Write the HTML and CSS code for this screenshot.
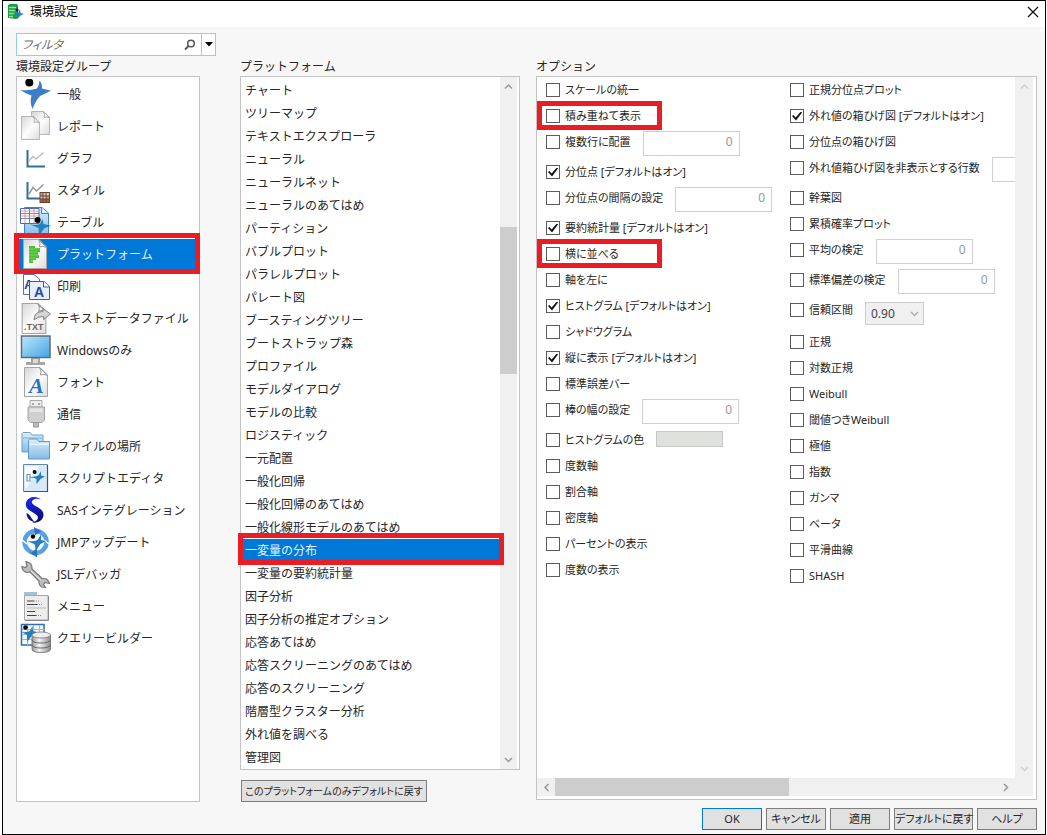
FILE: index.html
```html
<!DOCTYPE html>
<html lang="ja">
<head>
<meta charset="utf-8">
<meta name="viewport" content="width=device-width, initial-scale=1">
<title>環境設定</title>
<link rel="stylesheet" href="styles.css">
</head>
<body>
<svg class="defs" aria-hidden="true">
  <defs>
    <linearGradient id="page" x1="0" y1="0" x2="1" y2="1"><stop offset="0" stop-color="#d4d4d4"/><stop offset=".5" stop-color="#fdfdfd"/><stop offset="1" stop-color="#dcdcdc"/></linearGradient>
    <linearGradient id="sky" x1="0" y1="0" x2="1" y2="1"><stop offset="0" stop-color="#bfe6fa"/><stop offset="1" stop-color="#3fa6e6"/></linearGradient>
    <linearGradient id="folder" x1="0" y1="0" x2="0" y2="1"><stop offset="0" stop-color="#d9eefb"/><stop offset="1" stop-color="#84bbe6"/></linearGradient>
    <linearGradient id="metal" x1="0" y1="0" x2="1" y2="0"><stop offset="0" stop-color="#999"/><stop offset=".4" stop-color="#f4f4f4"/><stop offset="1" stop-color="#8c8c8c"/></linearGradient>
    <linearGradient id="sas" x1="0" y1="0" x2="0" y2="1"><stop offset="0" stop-color="#1a2cff"/><stop offset="1" stop-color="#06085e"/></linearGradient>
    <symbol id="figure" viewBox="0 0 32 32">
      <path fill="#3b7ec6" d="M1.500 11Q11 12 18 9.500Q20.500 6 20.500 1.500Q23.500 5 23 9.500Q28 11 32 11.500Q27 14.500 21 17Q16.500 22 13.500 30Q10.500 23 12.500 16.500Q6 14.500 1.500 11Z"/>
      <circle cx="10.300" cy="3.500" r="4"/>
    </symbol>
    <symbol id="axes" viewBox="0 0 32 32">
      <path fill="none" stroke="#2f6f94" stroke-width="2" d="M8.500 7V23.500H26"/>
    </symbol>
    <symbol id="sheet" viewBox="0 0 24 30">
      <path fill="url(#page)" stroke="#a5a5a5" d="M.5.5H16L23.500 8V29.500H.5Z"/>
      <path fill="#f8f8f8" stroke="#999" d="M15.500.5Q18 4 16.500 8Q20 6.500 23.500 8.500Z"/>
    </symbol>
  </defs>
</svg>

<main class="dialog">
  <header class="titlebar">
    <svg class="app-icon" viewBox="0 0 16 16" aria-hidden="true"><path fill="#1d9a45" d="M0 1L2 0H9L10 2V14L8 15L0 14Z"/><path stroke="#8be89a" stroke-width="1.500" d="M1 3.500H8M1 6.500H8M1 9.500H7M1 12.500H5"/><path fill="#2b7fc0" d="M5 9L10 9L12 5L12.500 9L16 10L12.500 11.500L9 15.500L9.500 11.500Z"/><circle cx="9" cy="6" r="1.600" fill="#123"/></svg>
    <h1 class="title">環境設定</h1>
    <button class="close" type="button" aria-label="閉じる"><svg viewBox="0 0 12 12"><path stroke="#111" stroke-width="1.200" d="M1 1L11 11M11 1L1 11"/></svg></button>
  </header>

  <div class="content">
    <div class="filter">
      <input class="filter-input" type="search" placeholder="フィルタ" aria-label="フィルタ">
      <svg class="magnifier" viewBox="0 0 12 12" aria-hidden="true"><circle cx="7" cy="4.500" r="3.300" fill="none" stroke="#555" stroke-width="1.500"/><path stroke="#555" stroke-width="1.800" d="M4.500 7L1 10.500"/></svg>
      <button class="filter-menu" type="button" aria-label="フィルタのオプション"><svg viewBox="0 0 8 5"><path d="M0 0H8L4 4.500Z"/></svg></button>
    </div>

    <div class="columns">
      <section class="column">
        <h2 class="heading">環境設定グループ</h2>
        <ul class="panel groups">
          <li><button class="group" type="button"><svg viewBox="0 0 32 32"><use href="#figure"/></svg>一般</button></li>
          <li><button class="group" type="button"><svg viewBox="0 0 32 32"><use href="#sheet" x="12" y="0" width="19" height="24"/><use href="#sheet" x="2" y="5" width="19" height="24"/></svg>レポート</button></li>
          <li><button class="group" type="button"><svg viewBox="0 0 32 32"><use href="#axes"/><path fill="none" stroke="#b9bfc4" stroke-width="1.500" d="M10 18L14 13.500L17 16L24.500 9.500"/></svg>グラフ</button></li>
          <li><button class="group" type="button"><svg viewBox="0 0 32 32"><use href="#axes"/><path fill="none" stroke="#93999e" stroke-width="1.500" d="M10 19L14 12.500L17.500 16L24.500 9.500"/><path fill="#684338" d="M20.500 17H31V28H20.500Z"/><path fill="#d9a44a" d="M21.500 18h2v2.500h-2zM27.500 21.500h2.500v2h-2.500z"/><path fill="#d8c9c2" d="M24.500 18h2v2.500h-2zM27.500 18h2.500v2.500h-2.500zM21.500 21.500h2v2h-2zM24.500 21.500h2v2h-2z"/><path fill="#b55a48" d="M21.500 24.500h2v2.500h-2zM24.500 24.500h2v2.500h-2zM27.500 24.500h2.500v2.500h-2.500z"/></svg>スタイル</button></li>
          <li><button class="group" type="button"><svg viewBox="0 0 32 32"><path fill="url(#folder)" stroke="#3a84c4" d="M5.500.5H23L29.500 6V29.500H5.500Z"/><path fill="#e4f2fc" stroke="#3a84c4" d="M22.500.5V6.500H29.500"/><path fill="#fff" stroke="#3b6ec0" d="M1.500 1.500H20V16.500H1.500Z"/><path stroke="#3b6ec0" stroke-width=".8" d="M1.500 6.500H20M1.500 11.500H20M10.500 1.500V16.500"/><path stroke="#e58282" stroke-width=".8" d="M6 1.500V16.500M15 1.500V16.500M1.500 4H20M1.500 9H20"/><path fill="#2382bd" d="M11 17.500Q17 18.500 21 17L23.500 12L24.500 17L32 18.500L25 21.500L20 29L19.500 21Z"/><circle cx="18.600" cy="13" r="3"/></svg>テーブル</button></li>
          <li><button class="group is-selected is-marked" type="button" aria-current="true"><svg viewBox="0 0 32 32"><use href="#sheet" x="4" y="0" width="24" height="30"/><path fill="#4dbd35" d="M10 7H16V9H21V13H19V16H20V19H17V21H14V24H10Z"/><path stroke="#8edb75" stroke-width=".7" d="M10 10H20M10 13H19M10 16H19M10 19H17M10 22H14"/></svg>プラットフォーム</button></li>
          <li><button class="group" type="button"><svg viewBox="0 0 32 32"><path fill="#fff" stroke="#5b6fb8" d="M4.500 3.500H15L20.500 8V23.500H4.500Z"/><text class="glyph glyph-print" x="5" y="18" font-size="13">A</text><path fill="#e6effb" stroke="#3f57ae" d="M10.500 10.500H25L30.500 15.500V28.500H10.500Z"/><path fill="#fff" stroke="#3f57ae" d="M24.500 10.500V16H30.500"/><text class="glyph glyph-print" x="15" y="26" font-size="14">A</text></svg>印刷</button></li>
          <li><button class="group" type="button"><svg viewBox="0 0 32 32"><use href="#sheet" x="2" y="0" width="26" height="31"/><path fill="#d5d5d5" stroke="#777" stroke-width=".9" d="M15 17Q15 8.500 24 8.500V5.500L31.500 11L24.500 16.500V13.500Q19 13 15 17Z"/><text class="glyph glyph-txt" x="5" y="27" font-size="9">.TXT</text></svg>テキストデータファイル</button></li>
          <li><button class="group" type="button"><svg viewBox="0 0 32 32"><path fill="#a5a5a5" d="M12 22H21V27H26V30H7V27H12Z"/><path fill="#d9d9d9" d="M14 24H19V28H14Z"/><path fill="url(#sky)" stroke="#606d74" stroke-width="1.500" d="M2.500 1H31V22.500H2.500Z"/></svg>Windowsのみ</button></li>
          <li><button class="group" type="button"><svg viewBox="0 0 32 32"><use href="#sheet" x="5" y="0" width="24" height="30"/><text class="glyph glyph-font" x="10" y="26" font-size="22">A</text></svg>フォント</button></li>
          <li><button class="group" type="button"><svg viewBox="0 0 32 32"><path fill="#eee" stroke="#aaa" d="M11 1.500H23V8H11Z"/><path fill="#aaa" d="M13 4H15V6H13ZM19 4H21V6H19Z"/><path fill="#d0d0d0" stroke="#a6a6a6" d="M9 8H25.500V21L23 23.500H11.500L9 21Z"/><path fill="#e6e6e6" d="M11 9.500H23.500V13H11Z"/><path fill="#bbb" stroke="#999" d="M14.500 23.500H19.500V28H14.500Z"/></svg>通信</button></li>
          <li><button class="group" type="button"><svg viewBox="0 0 32 32"><path fill="url(#folder)" stroke="#6f9fc4" d="M3 21V2.500L4 1.500H11L13 4H24V21Z"/><path fill="#9fc9ea" d="M3.500 6H23.500V8H3.500Z"/><path fill="url(#folder)" stroke="#6798c0" d="M9.500 28V9.500L10.500 8H18L20 10.500H30.500V28Z"/><path fill="#e8f6ff" d="M10 12.500H30V14H10Z"/></svg>ファイルの場所</button></li>
          <li><button class="group" type="button"><svg viewBox="0 0 32 32"><path fill="#d8e9f8" stroke="#6a87a8" d="M4.500 1.500H28.500V28.500H4.500Z"/><path fill="none" stroke="#34587e" stroke-width="1.200" d="M28.500 2V28.500H5"/><path fill="#f7fbff" d="M6 3H20L8 25H6Z"/><path fill="none" stroke="#8494a5" stroke-width="1.200" d="M8 11.500H11V18H8ZM11 14.500H14"/><path fill="#247fc0" d="M12 13.500Q17 14 19.500 12.500L22 8L22 12.500L26 13.500L21.500 16L17.500 21L17.500 16Z"/><circle cx="15.600" cy="9" r="2"/></svg>スクリプトエディタ</button></li>
          <li><button class="group" type="button"><svg viewBox="0 0 32 32"><path fill="url(#sas)" d="M22 4.500C18 .5 8.500 1 7 8C6 13 10 15 14 17.500C19 20.500 20 22 18 25C17 26 15 27 13 27.500C20 28.500 24.500 24.500 24.500 19.500C24.500 15.500 21 13.500 17.500 11.500C12.500 8.500 12 7.500 13.500 5.500C15 3.500 19 3.500 22 4.500Z"/><path fill="#0a0f8c" d="M7.500 18C7.500 23 11 26.500 16 27C12.500 24.500 11.500 19.500 7.500 18Z"/></svg>SASインテグレーション</button></li>
          <li><button class="group" type="button"><svg viewBox="0 0 32 32"><circle cx="16.600" cy="15" r="11" fill="#f3f9ff" stroke="#5a9fe0" stroke-width="4.500"/><path fill="#2f72c4" d="M15 0L22 4L16 8.500ZM18 21.500L11.500 26L18 30.500Z"/><path stroke="#fff" stroke-width="1.500" d="M3 13L8 17M25 13L30 17"/><path fill="#247fc0" d="M8.500 14Q15 15 18.500 13L22 7.500L22 13L27 14L21.500 17L16.500 24L16 17.500Z"/><circle cx="14" cy="9.500" r="2.200"/></svg>JMPアップデート</button></li>
          <li><button class="group" type="button"><svg viewBox="0 0 32 32"><path fill="#bdbdbd" stroke="#777" stroke-width="1.200" d="M7 2.500L8 7L6.500 8.500L3 7.500Q3 12 7.500 13.500L11 13L20 22Q19.500 26 23 28L26.500 28.500L24.500 25.500L26 23.500L30.500 24.500Q29 19.500 24.500 19.500L23 19.500L13 10Q13.500 3.500 7 2.500Z"/><path stroke="#eee" d="M12 12L22 21.500"/></svg>JSLデバッガ</button></li>
          <li><button class="group" type="button"><svg viewBox="0 0 32 32"><path fill="#a3c2d2" d="M5 1H18V5H5Z"/><path fill="#ededed" stroke="#a8a8a8" d="M5.500 4.500H29V29H5.500Z"/><path fill="none" stroke="#888" d="M29.500 5V29.500H6"/><path stroke="#444" stroke-width="1.200" d="M8 10H15M8 13.500H18M8 20.500H16M8 24.500H17"/><path stroke="#888" stroke-dasharray="1 1" d="M15 10H21M18 13.500H24M17 24.500H23"/><path stroke="#bbb" d="M8 17H27"/></svg>メニュー</button></li>
          <li><button class="group" type="button"><svg viewBox="0 0 32 32"><path fill="#f5faff" stroke="#2f6fb0" stroke-width="1.500" d="M2.500 1.500H25V22H2.500Z"/><path stroke="#9dbcdc" d="M3 6.500H25M3 11.500H25M3 16.500H25M8.500 2V22M14.500 2V22M20.500 2V22"/><path fill="#247fc0" d="M2.500 9Q8 9.500 11 8L13.500 3L14 8L18 9L13.500 12L8 19L8 12Z"/><circle cx="6.500" cy="4.500" r="2.300"/><path fill="url(#metal)" stroke="#666" stroke-width=".8" d="M13 12V26Q13 29.500 22 29.500T31.500 26V12Z"/><path fill="none" stroke="#666" d="M13 17Q14 20 22 20T31.500 17M13 22Q14 25 22 25T31.500 22"/><ellipse cx="22.200" cy="12" rx="9.300" ry="3" fill="#eee" stroke="#777" stroke-width=".8"/></svg>クエリービルダー</button></li>
        </ul>
      </section>

      <section class="column platform-column">
        <h2 class="heading">プラットフォーム</h2>
        <div class="panel scroll-panel">
          <ul class="platforms">
            <li><button class="platform" type="button">チャート</button></li>
            <li><button class="platform" type="button">ツリーマップ</button></li>
            <li><button class="platform" type="button">テキストエクスプローラ</button></li>
            <li><button class="platform" type="button">ニューラル</button></li>
            <li><button class="platform" type="button">ニューラルネット</button></li>
            <li><button class="platform" type="button">ニューラルのあてはめ</button></li>
            <li><button class="platform" type="button">パーティション</button></li>
            <li><button class="platform" type="button">バブルプロット</button></li>
            <li><button class="platform" type="button">パラレルプロット</button></li>
            <li><button class="platform" type="button">パレート図</button></li>
            <li><button class="platform" type="button">ブースティングツリー</button></li>
            <li><button class="platform" type="button">ブートストラップ森</button></li>
            <li><button class="platform" type="button">プロファイル</button></li>
            <li><button class="platform" type="button">モデルダイアログ</button></li>
            <li><button class="platform" type="button">モデルの比較</button></li>
            <li><button class="platform" type="button">ロジスティック</button></li>
            <li><button class="platform" type="button">一元配置</button></li>
            <li><button class="platform" type="button">一般化回帰</button></li>
            <li><button class="platform" type="button">一般化回帰のあてはめ</button></li>
            <li><button class="platform" type="button">一般化線形モデルのあてはめ</button></li>
            <li><button class="platform is-selected is-marked" type="button" aria-current="true">一変量の分布</button></li>
            <li><button class="platform" type="button">一変量の要約統計量</button></li>
            <li><button class="platform" type="button">因子分析</button></li>
            <li><button class="platform" type="button">因子分析の推定オプション</button></li>
            <li><button class="platform" type="button">応答あてはめ</button></li>
            <li><button class="platform" type="button">応答スクリーニングのあてはめ</button></li>
            <li><button class="platform" type="button">応答のスクリーニング</button></li>
            <li><button class="platform" type="button">階層型クラスター分析</button></li>
            <li><button class="platform" type="button">外れ値を調べる</button></li>
            <li><button class="platform" type="button">管理図</button></li>
          </ul>
          <div class="scrollbar vertical">
            <svg class="arrow" viewBox="0 0 9 9"><path d="M1 6.500L4.500 3L8 6.500"/></svg>
            <div class="track"><span class="lead"></span><span class="thumb"></span><span class="rest"></span></div>
            <svg class="arrow" viewBox="0 0 9 9"><path d="M1 3L4.500 6.500L8 3"/></svg>
          </div>
        </div>
        <button class="button reset" type="button">このプラットフォームのみデフォルトに戻す</button>
      </section>

      <section class="column options-column">
        <h2 class="heading">オプション</h2>
        <div class="panel options-panel">
          <div class="options">
            <div class="option-list">
              <div class="option"><label class="check"><input type="checkbox">スケールの統一</label></div>
              <div class="option"><label class="check is-marked"><input type="checkbox">積み重ねて表示</label></div>
              <div class="option tall"><label class="check"><input type="checkbox">複数行に配置</label><input class="number" type="text" value="0" disabled aria-label="複数行に配置の値"></div>
              <div class="option"><label class="check"><input type="checkbox" checked>分位点 [デフォルトはオン]</label></div>
              <div class="option tall"><label class="check"><input type="checkbox">分位点の間隔の設定</label><input class="number" type="text" value="0" disabled aria-label="分位点の間隔の値"></div>
              <div class="option"><label class="check"><input type="checkbox" checked>要約統計量 [デフォルトはオン]</label></div>
              <div class="option"><label class="check is-marked"><input type="checkbox">横に並べる</label></div>
              <div class="option"><label class="check"><input type="checkbox">軸を左に</label></div>
              <div class="option"><label class="check"><input type="checkbox" checked>ヒストグラム [デフォルトはオン]</label></div>
              <div class="option"><label class="check"><input type="checkbox">シャドウグラム</label></div>
              <div class="option"><label class="check"><input type="checkbox" checked>縦に表示 [デフォルトはオン]</label></div>
              <div class="option"><label class="check"><input type="checkbox">標準誤差バー</label></div>
              <div class="option tall"><label class="check"><input type="checkbox">棒の幅の設定</label><input class="number" type="text" value="0" disabled aria-label="棒の幅の値"></div>
              <div class="option"><label class="check"><input type="checkbox">ヒストグラムの色</label><button class="swatch" type="button" disabled aria-label="色の選択"></button></div>
              <div class="option"><label class="check"><input type="checkbox">度数軸</label></div>
              <div class="option"><label class="check"><input type="checkbox">割合軸</label></div>
              <div class="option"><label class="check"><input type="checkbox">密度軸</label></div>
              <div class="option"><label class="check"><input type="checkbox">パーセントの表示</label></div>
              <div class="option"><label class="check"><input type="checkbox">度数の表示</label></div>
            </div>
            <div class="option-list">
              <div class="option"><label class="check"><input type="checkbox">正規分位点プロット</label></div>
              <div class="option"><label class="check"><input type="checkbox" checked>外れ値の箱ひげ図 [デフォルトはオン]</label></div>
              <div class="option"><label class="check"><input type="checkbox">分位点の箱ひげ図</label></div>
              <div class="option tall"><label class="check"><input type="checkbox">外れ値箱ひげ図を非表示とする行数</label><input class="number" type="text" value="" disabled aria-label="非表示とする行数の値"></div>
              <div class="option"><label class="check"><input type="checkbox">幹葉図</label></div>
              <div class="option"><label class="check"><input type="checkbox">累積確率プロット</label></div>
              <div class="option tall"><label class="check"><input type="checkbox">平均の検定</label><input class="number" type="text" value="0" disabled aria-label="平均の値"></div>
              <div class="option tall"><label class="check"><input type="checkbox">標準偏差の検定</label><input class="number" type="text" value="0" disabled aria-label="標準偏差の値"></div>
              <div class="option taller"><label class="check"><input type="checkbox">信頼区間</label><span class="select"><select disabled aria-label="信頼水準"><option>0.90</option></select><svg class="arrow" viewBox="0 0 9 9"><path d="M1 3L4.500 6.500L8 3"/></svg></span></div>
              <div class="option"><label class="check"><input type="checkbox">正規</label></div>
              <div class="option"><label class="check"><input type="checkbox">対数正規</label></div>
              <div class="option"><label class="check"><input type="checkbox">Weibull</label></div>
              <div class="option"><label class="check"><input type="checkbox">閾値つきWeibull</label></div>
              <div class="option"><label class="check"><input type="checkbox">極値</label></div>
              <div class="option"><label class="check"><input type="checkbox">指数</label></div>
              <div class="option"><label class="check"><input type="checkbox">ガンマ</label></div>
              <div class="option"><label class="check"><input type="checkbox">ベータ</label></div>
              <div class="option"><label class="check"><input type="checkbox">平滑曲線</label></div>
              <div class="option"><label class="check"><input type="checkbox">SHASH</label></div>
            </div>
          </div>
          <div class="scrollbar vertical is-idle">
            <svg class="arrow" viewBox="0 0 9 9"><path d="M1 6.500L4.500 3L8 6.500"/></svg>
            <svg class="arrow" viewBox="0 0 9 9"><path d="M1 3L4.500 6.500L8 3"/></svg>
          </div>
          <div class="scrollbar horizontal">
            <svg class="arrow" viewBox="0 0 9 9"><path d="M6.500 1L3 4.500L6.500 8"/></svg>
            <div class="track"><span class="thumb"></span></div>
            <svg class="arrow" viewBox="0 0 9 9"><path d="M3 1L6.500 4.500L3 8"/></svg>
          </div>
          <div class="corner"></div>
        </div>
      </section>
    </div>

    <footer class="actions">
      <button class="button is-default" type="button">OK</button>
      <button class="button" type="button">キャンセル</button>
      <button class="button" type="button">適用</button>
      <button class="button is-wide" type="button">デフォルトに戻す</button>
      <button class="button" type="button">ヘルプ</button>
    </footer>
  </div>
</main>
</body>
</html>
```

FILE: styles.css
```css
* {
  box-sizing: border-box;
}

body {
  margin: 0;
  background: #fff;
  color: #262626;
  font: 12px/20px "Noto Sans", "Noto Sans CJK JP", sans-serif;
}

button,
input,
select {
  margin: 0;
  color: inherit;
  font: inherit;
}

ul {
  margin: 0;
  padding: 0;
  list-style: none;
}

.defs {
  position: absolute;
  width: 0;
  height: 0;
}

.dialog {
  display: flex;
  flex-direction: column;
  min-height: 100vh;
  margin: 0 1px 0 2px;
  border: 1px solid #000;
  background: #f7f7f7;
}

.titlebar {
  display: flex;
  align-items: center;
  gap: 6px;
  height: 26px;
  padding: 0 6px 4px 5px;
  background: #fff;
}

.app-icon {
  width: 16px;
  height: 16px;
}

.title {
  flex: 1;
  margin: 0;
  color: #000;
  font-size: 12px;
  font-weight: 400;
}

.close {
  display: flex;
  padding: 0;
  border: 0;
  background: none;
}

.close svg {
  width: 12px;
  height: 12px;
}

.content {
  display: flex;
  flex: 1;
  flex-direction: column;
  padding: 6px 8px 4px 13px;
}

.filter {
  display: flex;
  align-items: center;
  width: 200px;
  height: 23px;
  border: 1px solid #8fcdec;
  background: #fff;
}

.filter-input {
  flex: 1;
  min-width: 0;
  padding: 0 0 0 5px;
  border: 0;
  background: none;
  font-style: italic;
  font-feature-settings: "palt";
  outline: 0;
  appearance: none;
}

.filter-input::placeholder {
  color: #707070;
}

.magnifier {
  width: 12px;
  height: 12px;
  margin-right: 5px;
}

.filter-menu {
  display: flex;
  align-items: center;
  justify-content: center;
  width: 14px;
  height: 100%;
  padding: 0;
  border: 0;
  border-left: 1px solid #8fcdec;
  background: #fff;
}

.filter-menu svg {
  width: 8px;
  height: 5px;
}

.columns {
  display: grid;
  flex: 1;
  grid-template-columns: 184fr 304fr 501fr;
  column-gap: 16px;
}

.column {
  display: flex;
  flex-direction: column;
  min-width: 0;
}

.platform-column {
  padding-left: 24px;
}

.options-column {
  padding-bottom: 2px;
}

.heading {
  height: 20px;
  margin: 0;
  font-size: 12px;
  font-weight: 400;
  line-height: 22px;
  white-space: nowrap;
}

.panel {
  flex: 1;
  border: 1px solid #c3c3c3;
  background: #fff;
}

.groups {
  padding-top: 2px;
}

.group,
.platform {
  display: flex;
  align-items: center;
  width: 100%;
  padding: 0;
  border: 0;
  background: none;
  text-align: left;
  white-space: nowrap;
}

.group {
  gap: 6px;
  height: 32px;
  padding-left: 2px;
  line-height: 22px;
}

.group svg {
  flex: none;
  width: 32px;
  height: 32px;
}

.glyph {
  font-family: "Liberation Serif", serif;
  font-weight: 700;
}

.glyph-print {
  fill: #2747a8;
  font-family: "Liberation Sans", sans-serif;
}

.glyph-txt {
  fill: #666;
  font-family: "Liberation Sans", sans-serif;
}

.glyph-font {
  fill: #2672c8;
  font-style: italic;
}

.is-selected {
  background: #0078d7;
  color: #e4f2ff;
}

/* Red call-out frame around the entries being explained */
.is-marked {
  position: relative;
}

.is-marked::after {
  position: absolute;
  z-index: 1;
  inset: -6px -4px -3px;
  border: 5px solid #eb1c24;
  content: "";
  pointer-events: none;
}

.group.is-marked::after {
  right: -1px;
  left: -3px;
}

.scroll-panel {
  display: flex;
  padding-right: 2px;
}

.platforms {
  flex: 1;
  padding-top: 2px;
}

.platform {
  height: 23px;
  padding-left: 4px;
}

.platform.is-marked::after {
  left: -3px;
}

.scrollbar {
  display: flex;
  align-items: center;
  justify-content: space-between;
  background: #f0f0f0;
}

.vertical {
  flex-direction: column;
  width: 17px;
  padding: 5px 0;
}

.horizontal {
  height: 18px;
  padding: 0 5px;
  gap: 4px;
}

.arrow {
  flex: none;
  width: 9px;
  height: 9px;
  fill: none;
  stroke: #999;
  stroke-width: 1.5;
}

.is-idle .arrow {
  stroke: #d0d0d0;
}

.track {
  display: flex;
  flex: 1;
}

.vertical .track {
  flex-direction: column;
  width: 100%;
}

.lead {
  flex: 136;
}

.rest {
  flex: 382;
}

.thumb {
  flex: 147;
  background: #cdcdcd;
}

.horizontal .track {
  height: 100%;
}

.horizontal .thumb {
  flex: 0 0 53%;
}

.options-panel {
  display: grid;
  grid-template-rows: 1fr 18px;
  grid-template-columns: minmax(0, 1fr) 18px;
  padding: 0 3px 3px 0;
}

.corner {
  background: #f0f0f0;
}

.options-panel .vertical {
  width: auto;
}

.options {
  display: grid;
  grid-template-columns: 244px 1fr;
  padding-left: 9px;
  overflow: hidden;
  font-size: 11px;
  font-feature-settings: "palt";
}

.option-list {
  min-width: 0;
}

.option {
  display: flex;
  align-items: flex-start;
  gap: 12px;
  height: 26px;
}

.option.tall {
  height: 30px;
}

.option.taller {
  height: 32px;
}

.check {
  display: flex;
  flex: none;
  align-items: center;
  gap: 5px;
  height: 26px;
  white-space: nowrap;
}

.check input {
  display: grid;
  flex: none;
  width: 14px;
  height: 14px;
  border: 1px solid #5c5c5c;
  background: #fff;
  appearance: none;
  place-items: center;
}

.check input:checked::before {
  width: 10px;
  height: 9px;
  background: #111;
  clip-path: polygon(0 50%, 14% 38%, 37% 68%, 88% 0, 100% 12%, 40% 100%);
  content: "";
}

.check.is-marked {
  min-width: 98px;
}

.check.is-marked::after {
  inset: -2px -18px -1px -9px;
}

.number {
  flex: none;
  width: 97px;
  height: 25px;
  margin-top: 2px;
  padding: 0 6px 4px;
  border: 1px solid #d0d0d0;
  background: #fff;
  color: #999;
  font-size: 12px;
  text-align: right;
}

.swatch {
  width: 67px;
  height: 16px;
  margin-top: 4px;
  border: 1px solid #c8c8c8;
  background: #dde3dc;
}

.select {
  display: flex;
  align-items: center;
  width: 59px;
  height: 23px;
  margin-top: 5px;
  padding-right: 4px;
  border: 1px solid #ccc;
  background: #f0f0f0;
  font-size: 12px;
}

.select select {
  flex: 1;
  min-width: 0;
  padding: 0 0 0 5px;
  border: 0;
  background: none;
  color: #444;
  opacity: 1;
  appearance: none;
}

.select .arrow {
  stroke: #b0b0b0;
}

.button {
  width: 60px;
  height: 22px;
  padding: 0;
  border: 1px solid #7d7d7d;
  background: #e1e1e1;
  font-size: 11px;
  font-feature-settings: "palt";
  line-height: 20px;
  white-space: nowrap;
}

.button.is-default {
  border-color: #0078d7;
}

.button.is-wide {
  width: 79px;
}

.button.reset {
  width: 186px;
  margin: 10px 0 0 1px;
  font-size: 10px;
}

.actions {
  display: flex;
  justify-content: flex-end;
  gap: 4px;
  padding-top: 6px;
}
```
